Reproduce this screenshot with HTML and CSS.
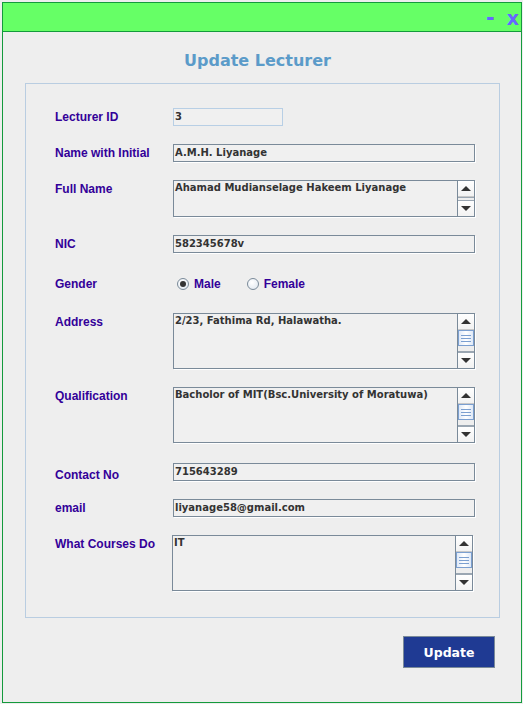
FILE: index.html
```html
<!DOCTYPE html>
<html>
<head>
<meta charset="utf-8">
<link rel="stylesheet" href="styles.css">
</head>
<body>
<div class="window">
  <div class="titlebar">
    <span class="ctl ctl-min">-</span>
    <span class="ctl ctl-close">x</span>
  </div>
  <div class="content">
    <h1 class="heading">Update Lecturer</h1>
    <div class="panel">
      <div class="row r-id">
        <div class="label">Lecturer ID</div>
        <div class="field field-disabled field-short">3</div>
      </div>
      <div class="row r-gap18">
        <div class="label">Name with Initial</div>
        <div class="field">A.M.H. Liyanage</div>
      </div>
      <div class="row r-gap18">
        <div class="label">Full Name</div>
        <div class="area area-small">
          <div class="area-text">Ahamad Mudianselage Hakeem Liyanage</div>
          <div class="sb">
            <div class="sb-btn"><span class="tri-up"></span></div>
            <div class="sb-track"></div>
            <div class="sb-btn"><span class="tri-down"></span></div>
          </div>
        </div>
      </div>
      <div class="row r-gap18">
        <div class="label">NIC</div>
        <div class="field">582345678v</div>
      </div>
      <div class="row r-gender">
        <div class="label">Gender</div>
        <div class="radios">
          <span class="radio"><span class="dot checked"></span>Male</span>
          <span class="radio"><span class="dot"></span>Female</span>
        </div>
      </div>
      <div class="row r-address">
        <div class="label">Address</div>
        <div class="area">
          <div class="area-text">2/23, Fathima Rd, Halawatha.</div>
          <div class="sb">
            <div class="sb-btn"><span class="tri-up"></span></div>
            <div class="sb-thumb"><span></span><span></span><span></span></div>
            <div class="sb-track"></div>
            <div class="sb-btn"><span class="tri-down"></span></div>
          </div>
        </div>
      </div>
      <div class="row r-gap18">
        <div class="label">Qualification</div>
        <div class="area">
          <div class="area-text">Bacholor of MIT(Bsc.University of Moratuwa)</div>
          <div class="sb">
            <div class="sb-btn"><span class="tri-up"></span></div>
            <div class="sb-thumb"><span></span><span></span><span></span></div>
            <div class="sb-track"></div>
            <div class="sb-btn"><span class="tri-down"></span></div>
          </div>
        </div>
      </div>
      <div class="row r-contact">
        <div class="label label-low">Contact No</div>
        <div class="field">715643289</div>
      </div>
      <div class="row r-gap18">
        <div class="label">email</div>
        <div class="field">liyanage58@gmail.com</div>
      </div>
      <div class="row r-gap18">
        <div class="label">What Courses Do</div>
        <div class="area area-courses">
          <div class="area-text">IT</div>
          <div class="sb">
            <div class="sb-btn"><span class="tri-up"></span></div>
            <div class="sb-thumb"><span></span><span></span><span></span></div>
            <div class="sb-track"></div>
            <div class="sb-btn"><span class="tri-down"></span></div>
          </div>
        </div>
      </div>
    </div>
    <div class="actions">
      <button class="btn">Update</button>
    </div>
  </div>
</div>
</body>
</html>
```
FILE: styles.css
```css
html, body {
  margin: 0;
  padding: 0;
  background: #eeeeee;
}
body {
  width: 523px;
  height: 704px;
  overflow: hidden;
}
.window {
  margin: 2px 0 0 2px;
  width: 520px;
  height: 701px;
  box-sizing: border-box;
  border: 1px solid #149a3c;
  display: flex;
  flex-direction: column;
  background: #eeeeee;
}
.titlebar {
  height: 28px;
  background: #66ff66;
  border-bottom: 1px solid #149a3c;
  display: flex;
  justify-content: flex-end;
  align-items: center;
  gap: 12px;
  padding-right: 2px;
  font-family: "DejaVu Sans", sans-serif;
  font-weight: bold;
  color: #6666ff;
}
.ctl {
  font-size: 19px;
  line-height: 20px;
}
.ctl-min {
  font-size: 21px;
  margin-top: 1px;
}
.ctl-close {
  margin-top: 2px;
}
.content {
  flex: 1;
  display: flex;
  flex-direction: column;
}
.heading {
  margin: 19px 0 0 0;
  height: 32px;
  font-family: "DejaVu Sans", sans-serif;
  font-weight: bold;
  font-size: 16px;
  line-height: 20px;
  color: #5b9bc9;
  text-align: center;
  padding-right: 9px;
}
.panel {
  margin-left: 22px;
  width: 475px;
  height: 535px;
  box-sizing: border-box;
  border: 1px solid #b9cde1;
  padding: 24px 0 0 29px;
  display: flex;
  flex-direction: column;
}
.row {
  display: flex;
  align-items: flex-start;
}
.r-gap18 { margin-top: 18px; }
.r-gender { margin-top: 22px; }
.r-address { margin-top: 20px; }
.r-contact { margin-top: 20px; }
.label {
  width: 118px;
  flex: none;
  font-family: "Liberation Sans", Arial, sans-serif;
  font-weight: bold;
  font-size: 12px;
  line-height: 18px;
  color: #330099;
}
.label-low {
  margin-top: 3px;
  margin-bottom: -3px;
}
.field {
  width: 302px;
  height: 18px;
  box-sizing: border-box;
  border: 1px solid #7a8a99;
  box-shadow: 1px 1px 0 #ffffff;
  background: #f0f0f0;
  padding-left: 1px;
  font-family: "DejaVu Sans", sans-serif;
  font-weight: bold;
  font-size: 10px;
  line-height: 15px;
  color: #333333;
}
.field-disabled {
  border-color: #b8cfe5;
  box-shadow: none;
}
.field-short {
  width: 110px;
}
.area {
  width: 302px;
  height: 56px;
  box-sizing: border-box;
  border: 1px solid #7a8a99;
  box-shadow: 1px 1px 0 #ffffff;
  background: #f0f0f0;
  display: flex;
}
.area-small {
  height: 37px;
}
.area-courses {
  width: 301px;
  margin-left: -1px;
}
.area-text {
  flex: 1;
  padding-left: 1px;
  font-family: "DejaVu Sans", sans-serif;
  font-weight: bold;
  font-size: 10px;
  line-height: 13px;
  color: #333333;
}
.sb {
  width: 16px;
  flex: none;
  display: flex;
  flex-direction: column;
  border-left: 1px solid #7a8a99;
  background: #eeeeee;
}
.sb-btn {
  height: 16px;
  flex: none;
  box-sizing: border-box;
  background: linear-gradient(#ffffff, #f2f2f2);
  border-bottom: 1px solid #c8c8c8;
  display: flex;
  align-items: center;
  justify-content: center;
}
.sb-btn:last-child {
  border-bottom: none;
  border-top: 1px solid #9aa6b2;
}
.tri-up {
  width: 0;
  height: 0;
  border-left: 5px solid transparent;
  border-right: 5px solid transparent;
  border-bottom: 5px solid #333333;
}
.tri-down {
  width: 0;
  height: 0;
  border-left: 5px solid transparent;
  border-right: 5px solid transparent;
  border-top: 5px solid #333333;
}
.sb-track {
  flex: 1;
  border-top: 1px solid #9aa6b2;
  background: #eeeeee;
}
.sb-thumb {
  height: 16px;
  flex: none;
  box-sizing: border-box;
  border: 1px solid #7b9fd0;
  background: linear-gradient(90deg, #dfe9f7, #ffffff 50%, #dfe9f7);
  display: flex;
  flex-direction: column;
  justify-content: center;
  align-items: center;
  gap: 2px;
}
.sb-thumb span {
  width: 10px;
  height: 1px;
  background: #7b9fd0;
}
.sb-thumb + .sb-track {
  border-top: none;
  border-bottom: 1px solid #9aa6b2;
}
.radios {
  display: flex;
  align-items: center;
  gap: 26px;
  padding-left: 4px;
  height: 18px;
}
.radio {
  display: flex;
  align-items: center;
  gap: 5px;
  font-family: "Liberation Sans", Arial, sans-serif;
  font-weight: bold;
  font-size: 12px;
  color: #330099;
}
.dot {
  width: 12px;
  height: 12px;
  box-sizing: border-box;
  border-radius: 50%;
  border: 1px solid #7a8a99;
  background: radial-gradient(circle at 40% 35%, #ffffff, #dde5ee);
  display: flex;
  align-items: center;
  justify-content: center;
}
.dot.checked::after {
  content: "";
  width: 6px;
  height: 6px;
  border-radius: 50%;
  background: #333333;
}
.actions {
  display: flex;
  justify-content: flex-end;
  padding-right: 26px;
  margin-top: 18px;
}
.btn {
  width: 92px;
  height: 32px;
  box-sizing: border-box;
  border: 1px solid #7a8a99;
  background: #1f3a93;
  color: #ffffff;
  font-family: "DejaVu Sans", sans-serif;
  font-weight: bold;
  font-size: 12.5px;
  padding: 0;
  margin: 0;
}
```
